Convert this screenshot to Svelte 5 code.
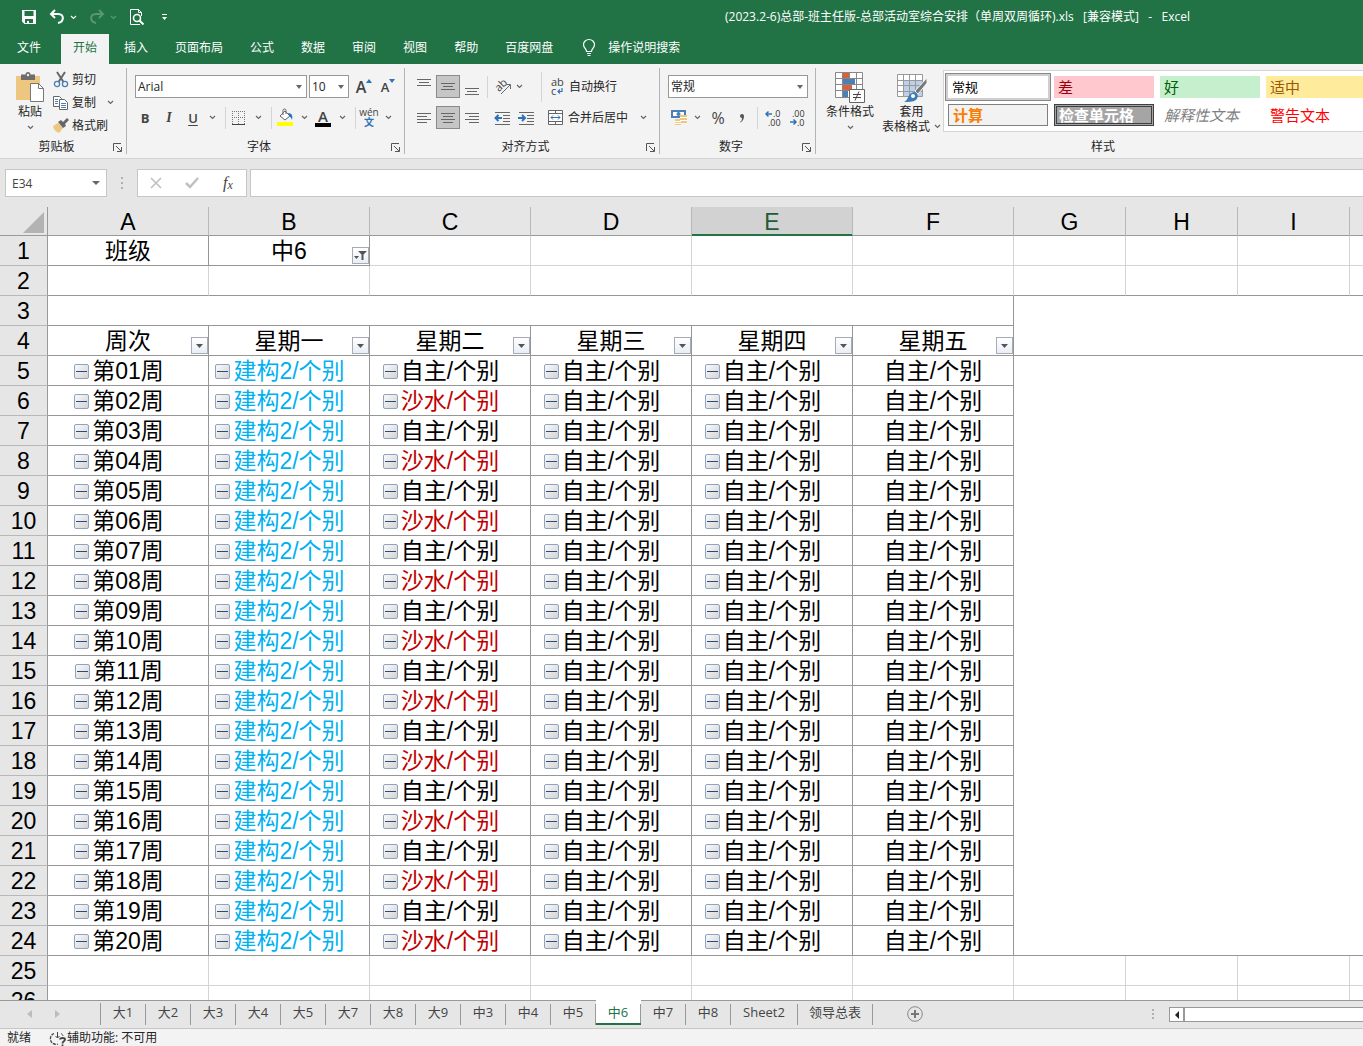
<script>
  const menuTabs = ['文件', '开始', '插入', '页面布局', '公式', '数据', '审阅', '视图', '帮助', '百度网盘'];
  const columns = ['A', 'B', 'C', 'D', 'E', 'F', 'G', 'H', 'I', 'J'];
  const headings = ['周次', '星期一', '星期二', '星期三', '星期四', '星期五'];
  const sheets = ['大1', '大2', '大3', '大4', '大5', '大7', '大8', '大9', '中3', '中4', '中5', '中6', '中7', '中8', 'Sheet2', '领导总表'];

  const cellStyles = [
    { name: '常规', type: 'normal' },
    { name: '差', type: 'bad' },
    { name: '好', type: 'good' },
    { name: '适中', type: 'neutral' },
    { name: '计算', type: 'calc' },
    { name: '检查单元格', type: 'check' },
    { name: '解释性文本', type: 'explain' },
    { name: '警告文本', type: 'warn' }
  ];

  // Every second week swaps the Tuesday activity.
  const weeks = Array.from({ length: 20 }, (_, i) => ({
    row: i + 5,
    cells: [
      { text: '第' + String(i + 1).padStart(2, '0') + '周' },
      { text: '建构2/个别', color: 'blue' },
      i % 2 ? { text: '沙水/个别', color: 'red' } : { text: '自主/个别' },
      { text: '自主/个别' },
      { text: '自主/个别' },
      { text: '自主/个别', last: true }
    ]
  }));

  let activeTab = $state('开始');
  let activeSheet = $state('中6');
  let formula = $state('');
  let nameBox = $state('E34');
</script>

{#snippet chevron()}
  <svg class="chevron" width="7" height="5" viewBox="0 0 7 5"><path d="M1 1l2.500 2.500L6 1" fill="none" stroke="currentColor" stroke-width="1.200" /></svg>
{/snippet}

{#snippet lines(rows)}
  <svg width="16" height="16" viewBox="0 0 16 16" shape-rendering="crispEdges">
    {#each rows as [x, y, w]}
      <rect {x} {y} width={w} height="1" fill="#666" />
    {/each}
  </svg>
{/snippet}

{#snippet launcher(label)}
  <button class="launcher" aria-label={label}>
    <svg width="10" height="10" viewBox="0 0 10 10"><path d="M.5 8V.5H8M3 3l5 5M8.500 4v4.500H4" fill="none" stroke="#555" /></svg>
  </button>
{/snippet}

{#snippet filterButton(active)}
  <button class="filter" aria-label="筛选">
    {#if active}
      <svg width="13" height="11" viewBox="0 0 13 11"><path d="M4 1h9L9.500 4.500V10h-2V4.500z" fill="#555" /><path d="M0 6h5L2.500 9z" fill="#555" /></svg>
    {:else}
      <svg width="7" height="4" viewBox="0 0 7 4"><path d="M0 0h7L3.500 4z" fill="#555" /></svg>
    {/if}
  </button>
{/snippet}

<div class="app">
  <header>
    <div class="titlebar">
      <div class="quick">
        <button class="qa" aria-label="保存">
          <svg width="16" height="16" viewBox="0 0 16 16"><path d="M1 1h14v14H3.500L1 12.500zM3.500 2v5h9V2zM4 10v4h8v-4z" fill="#fff" fill-rule="evenodd" /><path d="M6 12h2v3H6z" fill="#fff" /></svg>
        </button>
        <div class="pair">
          <button class="qa" aria-label="撤消">
            <svg width="16" height="16" viewBox="0 0 16 16"><path d="M6 1L2 5l4 4M2 5h7c7 0 6 8 0 9" fill="none" stroke="#fff" stroke-width="2" /></svg>
          </button>
          <button class="arrow" aria-label="撤消列表">{@render chevron()}</button>
        </div>
        <div class="pair faded">
          <button class="qa" aria-label="恢复">
            <svg width="16" height="16" viewBox="0 0 16 16"><path d="M10 1l4 4-4 4M14 5H7c-7 0-6 8 0 9" fill="none" stroke="#fff" stroke-width="2" /></svg>
          </button>
          <button class="arrow" aria-label="恢复列表">{@render chevron()}</button>
        </div>
        <button class="qa" aria-label="打印预览">
          <svg width="16" height="16" viewBox="0 0 16 16" fill="none" stroke="#fff"><path d="M11 15.500H1.500V.5h8l3 3V7" /><path d="M9.500.5v3h3" /><circle cx="8" cy="9" r="3.500" stroke-width="1.600" /><path d="M10.500 11.500l4 4" stroke-width="2" /></svg>
        </button>
        <button class="custom" aria-label="自定义快速访问工具栏">
          <svg width="7" height="8" viewBox="0 0 7 8"><path d="M1 1h5v1H1zM1 4h5L3.500 7z" fill="#fff" /></svg>
        </button>
      </div>
      <h1>(2023.2-6)总部-班主任版-总部活动室综合安排（单周双周循环).xls   [兼容模式]   -   Excel</h1>
    </div>

    <nav class="menu">
      {#each menuTabs as tab}
        <button class:active={tab === activeTab} class:file={tab === '文件'} onclick={() => (activeTab = tab)}>{tab}</button>
      {/each}
      <button class="tell">
        <svg width="14" height="18" viewBox="0 0 14 18" fill="none" stroke="#fff" stroke-width="1.200"><path d="M4.500 12.500c0-3-3-3.500-3-7a5.500 5 0 0 1 11 0c0 3.500-3 4-3 7zM5 14.500h4M5.500 16.500h3" /></svg>
        操作说明搜索
      </button>
    </nav>
  </header>

  <div class="ribbon">
    <section class="group clipboard">
      <div class="tools">
        <button class="big paste">
          <svg width="30" height="31" viewBox="0 0 30 31"><path d="M1 4h24v24H1z" fill="#edc77f" /><path d="M6 2.500h4.500a2.500 2.500 0 0 1 5 0H20V8H6z" fill="#6d6d6d" /><circle cx="13" cy="3" r="1.200" fill="#f3f3f3" /><path d="M15.500 11.500h8l5 5v13h-13z" fill="#fff" stroke="#777" /><path d="M23.500 11.500v5h5" fill="none" stroke="#777" /></svg>
          <span>粘贴</span>
          {@render chevron()}
        </button>
        <div class="stack">
          <button>
            <svg width="16" height="16" viewBox="0 0 16 16" fill="none"><path d="M4 0l6.500 10M12 0L5.500 10" stroke="#666" stroke-width="2" /><circle cx="4" cy="12" r="2.600" stroke="#4a7fb8" stroke-width="1.300" /><circle cx="12" cy="12" r="2.600" stroke="#4a7fb8" stroke-width="1.300" /></svg>
            剪切
          </button>
          <button>
            <svg width="16" height="16" viewBox="0 0 16 16" fill="#fff" stroke="#666"><path d="M.5 1.500h6l2 2v8h-8z" /><path d="M6.500 4.500h5l3 3v7h-8z" /><path d="M2 4.500h3M2 6.500h3M2 8.500h3M8 8.500h5M8 10.500h5M8 12.500h5" stroke="#4a7fb8" /></svg>
            复制
            <span class="copy-arrow">{@render chevron()}</span>
          </button>
          <button>
            <svg width="16" height="16" viewBox="0 0 16 16"><path d="M0 8l5-3 5 5-4 5c-3-1-5-3-6-7z" fill="#edc77f" /><path d="M5 4l3-2 2 2 4-4 2 2-4 4 1 2-3 2z" fill="#666" /></svg>
            格式刷
          </button>
        </div>
      </div>
      <footer><span>剪贴板</span>{@render launcher('剪贴板设置')}</footer>
    </section>

    <section class="group font">
      <div class="tools rows">
        <div class="line">
          <label class="combo family"><select aria-label="字体"><option>Arial</option></select></label>
          <label class="combo size"><select aria-label="字号"><option>10</option></select></label>
          <button class="tool letter" aria-label="增大字号">A<svg width="6" height="4" viewBox="0 0 6 4"><path d="M0 4l3-4 3 4z" fill="#2f73b7" /></svg></button>
          <button class="tool letter small" aria-label="减小字号">A<svg width="6" height="4" viewBox="0 0 6 4"><path d="M0 0h6L3 4z" fill="#2f73b7" /></svg></button>
        </div>
        <div class="line">
          <button class="tool bold">B</button>
          <button class="tool italic">I</button>
          <button class="tool underline">U</button>
          <button class="arrow" aria-label="下划线样式">{@render chevron()}</button>
          <i class="sep"></i>
          <button class="tool" aria-label="边框">
            <svg width="14" height="14" viewBox="0 0 14 14" stroke="#777" shape-rendering="crispEdges"><path d="M0 .5h14M0 6.500h14M.5 0v13M6.500 0v13M12.500 0v13" stroke-dasharray="1 1" /><path d="M0 13h13" stroke="#444" /></svg>
          </button>
          <button class="arrow" aria-label="边框样式">{@render chevron()}</button>
          <i class="sep"></i>
          <button class="tool" aria-label="填充颜色">
            <svg width="17" height="17" viewBox="0 0 17 17"><path d="M3 7l5-5 5 5-5 4z" fill="#fff" stroke="#666" /><path d="M6 6V1.500a1.500 1.500 0 0 1 3 0V5" fill="none" stroke="#666" /><path d="M11 4c4 0 5 3 4 7-1-3-2-3-3-4z" fill="#2f73b7" /><path d="M0 13h16v4H0z" fill="#ff0" /></svg>
          </button>
          <button class="arrow" aria-label="填充颜色列表">{@render chevron()}</button>
          <button class="tool font-color"><span>A</span></button>
          <button class="arrow" aria-label="字体颜色列表">{@render chevron()}</button>
          <i class="sep"></i>
          <button class="tool pinyin"><span>wén</span><b>文</b></button>
          <button class="arrow" aria-label="拼音选项">{@render chevron()}</button>
        </div>
      </div>
      <footer><span>字体</span>{@render launcher('字体设置')}</footer>
    </section>

    <section class="group align">
      <div class="tools rows">
        <div class="line">
          <button class="tool" aria-label="顶端对齐">{@render lines([[1, 0, 14], [3, 3, 10], [1, 6, 14]])}</button>
          <button class="tool on" aria-label="垂直居中">{@render lines([[1, 4, 14], [3, 7, 10], [1, 10, 14]])}</button>
          <button class="tool" aria-label="底端对齐">{@render lines([[1, 9, 14], [3, 12, 10], [1, 15, 14]])}</button>
          <i class="sep"></i>
          <button class="tool" aria-label="方向">
            <svg width="17" height="17" viewBox="0 0 17 17"><text x="0" y="11" font-size="11" font-family="Open Sans" fill="#444" transform="rotate(-45 6 8)">ab</text><path d="M6 16l9-9M11 6.500h4.500V11" fill="none" stroke="#666" /></svg>
          </button>
          <button class="arrow" aria-label="方向列表">{@render chevron()}</button>
          <i class="sep second"></i>
          <button class="wide">
            <svg width="16" height="18" viewBox="0 0 16 18"><text x="2" y="8" font-size="11" font-family="Open Sans" fill="#444">ab</text><text x="2" y="17" font-size="11" font-family="Open Sans" fill="#444">c</text><path d="M13 10v3.500H9M11 11.500l-2 2 2 2" fill="none" stroke="#2f73b7" stroke-width="1.200" /></svg>
            自动换行
          </button>
        </div>
        <div class="line">
          <button class="tool" aria-label="左对齐">{@render lines([[1, 3, 14], [1, 6, 10], [1, 9, 14], [1, 12, 10]])}</button>
          <button class="tool on" aria-label="居中">{@render lines([[1, 3, 14], [3, 6, 10], [1, 9, 14], [3, 12, 10]])}</button>
          <button class="tool" aria-label="右对齐">{@render lines([[1, 3, 14], [5, 6, 10], [1, 9, 14], [5, 12, 10]])}</button>
          <i class="sep"></i>
          <button class="tool" aria-label="减少缩进量">
            <svg width="17" height="14" viewBox="0 0 17 14"><path d="M1 1.500h15M9 4.500h7M9 7.500h7M9 10.500h7M1 13.500h15" stroke="#666" /><path d="M8 7H2M4.500 4L1.500 7l3 3" fill="none" stroke="#2f73b7" stroke-width="2" /></svg>
          </button>
          <button class="tool" aria-label="增加缩进量">
            <svg width="17" height="14" viewBox="0 0 17 14"><path d="M1 1.500h15M9 4.500h7M9 7.500h7M9 10.500h7M1 13.500h15" stroke="#666" /><path d="M0 7h6M4 4l3 3-3 3" fill="none" stroke="#2f73b7" stroke-width="2" /></svg>
          </button>
          <i class="sep second"></i>
          <button class="wide">
            <svg width="16" height="16" viewBox="0 0 16 16"><path d="M.5.5h14v14H.5zM.5 3.500h14M.5 11.500h14M7.500.5v3M7.500 11.500v3" fill="#fff" stroke="#666" /><path d="M3 7.500h9M5 5.500l-2 2 2 2M10 5.500l2 2-2 2" fill="none" stroke="#2f73b7" /></svg>
            合并后居中
          </button>
          <button class="arrow merge-arrow" aria-label="合并选项">{@render chevron()}</button>
        </div>
      </div>
      <footer><span>对齐方式</span>{@render launcher('对齐设置')}</footer>
    </section>

    <section class="group number">
      <div class="tools rows">
        <div class="line">
          <label class="combo format"><select aria-label="数字格式"><option>常规</option></select></label>
        </div>
        <div class="line">
          <button class="tool" aria-label="会计数字格式">
            <svg width="18" height="17" viewBox="0 0 18 17"><path d="M1 1h15v8H1z" fill="#4a7fb8" /><path d="M3 3h11v4H3z" fill="#fff" /><circle cx="8.500" cy="5" r="2" fill="#4a7fb8" /><path d="M10 6h7v8h-7z" fill="#edc77f" /><path d="M5 10h6v6H5z" fill="#edc77f" /><path d="M10 8.500h7M10 11.500h7M5 12.500h6M5 14.500h6" stroke="#fff" /></svg>
          </button>
          <button class="arrow" aria-label="货币列表">{@render chevron()}</button>
          <button class="tool percent">%</button>
          <button class="tool comma" aria-label="千位分隔样式"><svg width="6" height="10" viewBox="0 0 6 10"><path d="M1 3a2 2 0 1 1 4 0c0 3-1 5-3.500 6.500L1 9c1.500-1 2-2 2-4-1 0-2-1-2-2z" fill="#555" /></svg></button>
          <i class="sep"></i>
          <button class="tool" aria-label="增加小数位数">
            <svg width="17" height="16" viewBox="0 0 17 16"><path d="M7 4H1M3.500 1.500L1 4l2.500 2.500" fill="none" stroke="#2f73b7" stroke-width="1.500" /><text x="8" y="7" font-size="9" font-family="Open Sans" fill="#333">.0</text><text x="3" y="16" font-size="9" font-family="Open Sans" fill="#333">.00</text></svg>
          </button>
          <button class="tool" aria-label="减少小数位数">
            <svg width="17" height="16" viewBox="0 0 17 16"><path d="M1 12h6M4.500 9.500L7 12l-2.500 2.500" fill="none" stroke="#2f73b7" stroke-width="1.500" /><text x="3" y="7" font-size="9" font-family="Open Sans" fill="#333">.00</text><text x="8" y="16" font-size="9" font-family="Open Sans" fill="#333">.0</text></svg>
          </button>
        </div>
      </div>
      <footer><span>数字</span>{@render launcher('数字设置')}</footer>
    </section>

    <section class="group styles">
      <div class="tools">
        <button class="big cond">
          <svg width="30" height="31" viewBox="0 0 30 31"><path d="M.5.5h27v25H.5z" fill="#fff" /><path d="M8 1h6v6H8zM8 13h9v6H8z" fill="#d9603b" /><path d="M8 7h12v6H8zM8 19h5v6H8z" fill="#4a7fb8" /><path d="M.5.5h27v25H.5zM.5 6.500h27M.5 12.500h27M.5 18.500h27M7.500.5v25M14.500.5v6M21.500.5v25" fill="none" stroke="#888" /><path d="M14.500 17.500h15v13h-15z" fill="#fff" stroke="#666" /><path d="M18 22.500h8M18 25.500h8M24 19.500l-4 9" stroke="#444" /></svg>
          <span>条件格式</span>
          {@render chevron()}
        </button>
        <button class="big format-table">
          <svg width="30" height="31" viewBox="0 0 30 31"><path d="M.5 2.500h25v22H.5z" fill="#fff" /><path d="M7 8h18v16H7z" fill="#bdd0e8" /><path d="M.5 2.500h25v22H.5zM.5 8.500h25M.5 13.500h25M.5 19.500h25M6.500 2.500v22M12.500 2.500v22M18.500 2.500v22" fill="none" stroke="#999" /><path d="M30 6L18 19l3 3 9-11z" fill="#777" stroke="#f3f3f3" /><path d="M7 30c4-1 4-9 10-10 4 0 5 5 2 8-3 2-8 2-12 2z" fill="#3e7ab8" /><circle cx="16" cy="24" r="2" fill="#fff" /></svg>
          <span>套用</span>
          <span class="with-arrow">表格格式 {@render chevron()}</span>
        </button>
        <div class="gallery">
          {#each cellStyles as style}
            <button class="style {style.type}">{style.name}</button>
          {/each}
        </div>
      </div>
      <footer><span>样式</span></footer>
    </section>
  </div>

  <div class="formula-bar">
    <div class="name-box combo"><input aria-label="名称框" bind:value={nameBox} /></div>
    <svg class="dots" width="2" height="12" viewBox="0 0 2 12"><path d="M0 0h2v2H0zM0 5h2v2H0zM0 10h2v2H0z" fill="#b0b0b0" /></svg>
    <div class="formula-buttons">
      <button aria-label="取消"><svg width="12" height="12" viewBox="0 0 12 12"><path d="M1 1l10 10M11 1L1 11" stroke="#c0c0c0" stroke-width="1.600" /></svg></button>
      <button aria-label="输入"><svg width="14" height="12" viewBox="0 0 14 12"><path d="M1 6l4 4 8-9" fill="none" stroke="#c0c0c0" stroke-width="2.500" /></svg></button>
      <button class="fx">f<small>x</small></button>
    </div>
    <input class="formula" aria-label="编辑栏" bind:value={formula} />
  </div>

  <main>
    <table>
      <colgroup>
        <col class="col-head" />
        {#each columns as column, i}
          <col class={i < 6 ? 'col-wide' : 'col-narrow'} />
        {/each}
      </colgroup>
      <thead>
        <tr>
          <th class="corner"><svg width="21" height="21" viewBox="0 0 21 21"><path d="M21 0v21H0z" fill="#b3b3b3" /></svg></th>
          {#each columns as column}
            <th class:selected={column === 'E'}>{column}</th>
          {/each}
        </tr>
      </thead>
      <tbody>
        <tr>
          <th>1</th>
          <td class="dark">班级</td>
          <td class="dark">中6{@render filterButton(true)}</td>
          {#each columns.slice(2) as column}<td></td>{/each}
        </tr>
        <tr class="ruled">
          <th>2</th>
          {#each columns as column}<td></td>{/each}
        </tr>
        <tr>
          <th>3</th>
          <td class="dark" colspan="6"></td>
          <td class="dark" colspan="4" rowspan="2"></td>
        </tr>
        <tr>
          <th>4</th>
          {#each headings as heading}
            <td class="dark">{heading}{@render filterButton(false)}</td>
          {/each}
        </tr>
        {#each weeks as week, i}
          <tr>
            <th>{week.row}</th>
            {#each week.cells as cell}
              <td class="dark {cell.color ?? ''}">
                {#if !cell.last}<button class="collapse" aria-label="折叠"></button>{/if}{cell.text}
              </td>
            {/each}
            {#if i === 0}<td class="dark" colspan="4" rowspan="20"></td>{/if}
          </tr>
        {/each}
        {#each [25, 26] as row}
          <tr>
            <th>{row}</th>
            {#each columns as column}<td></td>{/each}
          </tr>
        {/each}
      </tbody>
    </table>
  </main>

  <div class="sheet-bar">
    <div class="sheet-nav">
      <button aria-label="上一个"><svg width="5" height="8" viewBox="0 0 5 8"><path d="M5 0v8L0 4z" fill="#bcbcbc" /></svg></button>
      <button aria-label="下一个"><svg width="5" height="8" viewBox="0 0 5 8"><path d="M0 0v8l5-4z" fill="#bcbcbc" /></svg></button>
    </div>
    <div class="sheets">
      {#each sheets as sheet}
        <button class:current={sheet === activeSheet} onclick={() => (activeSheet = sheet)}><span>{sheet}</span></button>
      {/each}
    </div>
    <button class="add" aria-label="新工作表">
      <svg width="16" height="16" viewBox="0 0 16 16"><circle cx="8" cy="8" r="7.300" fill="none" stroke="#888" /><path d="M8 4v8M4 8h8" stroke="#777" stroke-width="2" /></svg>
    </button>
    <svg class="dots" width="2" height="10" viewBox="0 0 2 10"><path d="M0 0h2v2H0zM0 4h2v2H0zM0 8h2v2H0z" fill="#b0b0b0" /></svg>
    <div class="scrollbar">
      <button aria-label="向左滚动"><svg width="4" height="8" viewBox="0 0 4 8"><path d="M4 0v8L0 4z" fill="#222" /></svg></button>
      <div class="thumb"></div>
    </div>
  </div>

  <div class="status">
    <span>就绪</span>
    <button>
      <svg width="17" height="15" viewBox="0 0 17 15" fill="none" stroke="#444"><path d="M4 2.500a5.500 5.500 0 0 0 4 10.500" stroke-dasharray="3 1" stroke-width="1.300" /><path d="M7.500 1v6M5.500 5l2 2 2-2M11 2.500c1 .5 2 1.500 2 2.500" /><path d="M10 8.500c0-2 5-2 5 0s-2.500 1.500-2.500 4M12.500 13.500V15" stroke-width="1.800" /></svg>
      辅助功能: 不可用
    </button>
  </div>
</div>

<style>
  :global(body) {
    margin: 0;
    overflow: hidden;
  }

  .app {
    display: flex;
    flex-direction: column;
    height: 100vh;
    overflow: hidden;
    background: #e6e6e6;
    color: #262626;
    font: 12px/16px 'Open Sans', 'Noto Sans CJK SC', sans-serif;
  }

  button,
  input,
  select {
    margin: 0;
    padding: 0;
    border: 0;
    background: none;
    color: inherit;
    font: inherit;
    box-sizing: border-box;
  }

  button {
    display: flex;
    align-items: center;
    justify-content: center;
    white-space: nowrap;
  }

  svg {
    display: block;
    flex: none;
    overflow: visible;
  }

  header {
    background: #217346;
    color: #fff;
  }

  .titlebar {
    display: flex;
    align-items: center;
    height: 34px;
  }

  .quick {
    display: flex;
    gap: 10px;
    padding-left: 20px;
  }

  .pair {
    display: flex;
    gap: 2px;
  }

  .faded {
    opacity: 0.25;
  }

  .qa {
    width: 18px;
    height: 18px;
  }

  .custom {
    width: 16px;
  }

  .arrow {
    width: 10px;
    flex: none;
  }

  h1 {
    margin: 0 0 0 553px;
    font-size: 12px;
    font-weight: normal;
    white-space: pre;
  }

  .menu {
    display: flex;
    gap: 3px;
    height: 30px;
    padding-left: 5px;
  }

  .menu button {
    padding: 0 12px 3px;
  }

  .menu .file {
    margin-right: 5px;
  }

  .menu .active {
    background: #f3f3f3;
    color: #217346;
  }

  .menu .tell {
    gap: 12px;
    padding-left: 14px;
  }

  .ribbon {
    display: flex;
    flex: none;
    height: 94px;
    overflow: hidden;
    background: #f3f3f3;
    border-bottom: 1px solid #d2d2d2;
  }

  .group {
    display: flex;
    flex: none;
    flex-direction: column;
    margin: 4px 0;
    border-right: 1px solid #b4b4b4;
    box-sizing: border-box;
  }

  .clipboard {
    width: 127px;
  }

  .font {
    width: 278px;
  }

  .align {
    width: 255px;
  }

  .number {
    width: 156px;
  }

  .styles {
    width: 578px;
  }

  .tools {
    display: flex;
    flex: 1;
  }

  .group footer {
    display: flex;
    align-items: center;
    height: 14px;
    padding-right: 3px;
  }

  .group footer span {
    flex: 1;
    text-align: center;
  }

  .launcher {
    align-self: flex-end;
    width: 10px;
    height: 12px;
  }

  .big {
    flex-direction: column;
    justify-content: flex-start;
    padding-top: 4px;
  }

  .big span {
    line-height: 15px;
  }

  .chevron {
    color: #666;
  }

  .titlebar .chevron {
    color: #fff;
  }

  .big > .chevron {
    margin-top: 6px;
  }

  .big > svg:first-child {
    margin-bottom: 1px;
  }

  .paste {
    width: 32px;
    margin-left: 14px;
  }

  .stack {
    margin-left: 7px;
  }

  .stack button {
    gap: 3px;
    height: 23px;
  }

  .copy-arrow {
    margin-left: 8px;
  }

  .rows {
    flex-direction: column;
    gap: 8px;
    padding-top: 7px;
    padding-left: 7px;
  }

  .rows .line {
    display: flex;
    flex: none;
    align-items: center;
    height: 23px;
  }

  .font .rows {
    padding-left: 6px;
  }

  .tool {
    flex: none;
    width: 24px;
    height: 23px;
    color: #444;
  }

  .on {
    background: #c6c6c6;
    border: 1px solid #8a8a8a;
  }

  .sep {
    width: 1px;
    height: 22px;
    margin: 0 3px;
    background: #d4d4d4;
  }

  .font .sep {
    margin-left: 6px;
    margin-right: 1px;
  }

  .font .arrow {
    width: 14px;
  }

  .combo {
    position: relative;
    display: block;
    height: 23px;
    background: #fff;
    border: 1px solid #999;
    box-sizing: border-box;
  }

  .combo select,
  .combo input {
    width: 100%;
    height: 100%;
    padding-left: 2px;
    appearance: none;
    outline: 0;
  }

  .combo::after {
    content: '';
    position: absolute;
    top: 9px;
    right: 4px;
    border: 3px solid transparent;
    border-top: 4px solid #666;
    border-bottom: 0;
    pointer-events: none;
  }

  .family {
    width: 172px;
    margin-left: 2px;
    margin-right: 2px;
  }

  .size {
    width: 40px;
    margin-right: 3px;
  }

  .format {
    width: 140px;
    margin-left: 1px;
  }

  .letter {
    align-items: flex-start;
    font-size: 16px;
    font-weight: 600;
    line-height: 24px;
  }

  .letter svg {
    margin-top: 4px;
  }

  .small {
    font-size: 13px;
  }

  .bold {
    font-weight: bold;
    font-size: 13px;
  }

  .italic {
    font: italic bold 14px 'Liberation Serif', serif;
  }

  .underline {
    font-weight: 600;
    font-size: 13px;
    text-decoration: underline;
    text-underline-offset: 2px;
  }

  .font-color span {
    width: 16px;
    border-bottom: 4px solid #000;
    font-size: 15px;
    font-weight: 600;
    line-height: 14px;
  }

  .pinyin {
    flex-direction: column;
    font-size: 10px;
    line-height: 9px;
  }

  .pinyin b {
    color: #2f73b7;
    line-height: 10px;
  }

  .align .arrow {
    margin-right: 14px;
    margin-left: -1px;
  }

  .number .arrow {
    margin-left: 1px;
    margin-right: 4px;
  }

  .align .second {
    height: 30px;
    margin: 0 7px 0 3px;
  }

  .wide {
    gap: 4px;
  }

  .align .merge-arrow {
    margin-left: 10px;
  }

  .percent {
    font-size: 16px;
  }

  .cond {
    width: 60px;
    margin-left: 4px;
  }

  .format-table {
    width: 63px;
  }

  .with-arrow {
    display: flex;
    align-items: center;
    gap: 4px;
  }

  .gallery {
    display: grid;
    grid-template-columns: repeat(4, 100px);
    grid-auto-rows: 22px;
    gap: 6px;
    width: 450px;
    height: 62px;
    margin-top: 2px;
    padding: 5px 4px;
    background: #fff;
    border: 1px solid #d4d4d4;
    box-sizing: border-box;
  }

  .style {
    justify-content: flex-start;
    padding-left: 4px;
    font-size: 15px;
    line-height: 20px;
  }

  .normal {
    font-size: 13px;
    color: #000;
    outline: 2px solid #d0cece;
    box-shadow: 0 0 0 3px #888;
  }

  .bad {
    background: #ffc7ce;
    color: #9c0006;
  }

  .good {
    background: #c6efce;
    color: #006100;
  }

  .neutral {
    background: #ffeb9c;
    color: #9c5700;
  }

  .calc {
    background: #f2f2f2;
    border: 1px solid #7f7f7f;
    color: #fa7d00;
    font-weight: bold;
  }

  .check {
    background: #a5a5a5;
    border: 3px double #3f3f3f;
    color: #fff;
    font-weight: bold;
    padding-left: 2px;
  }

  .explain {
    color: #7f7f7f;
    font-style: italic;
  }

  .warn {
    color: #f00;
  }

  .formula-bar {
    display: flex;
    flex: none;
    align-items: center;
    height: 28px;
    padding: 10px 0 10px 5px;
  }

  .name-box {
    width: 102px;
    height: 28px;
    border-color: #c6c6c6;
    color: #444;
  }

  .name-box input {
    padding-left: 6px;
  }

  .name-box::after {
    top: 11px;
    right: 6px;
    border-width: 4px 4px 0;
  }

  .formula-bar .dots {
    margin: 0 14px;
  }

  .formula-buttons {
    display: flex;
    width: 110px;
    height: 28px;
    margin-right: 3px;
    background: #fff;
    border: 1px solid #c6c6c6;
    box-sizing: border-box;
  }

  .formula-buttons button {
    flex: 1;
  }

  .formula-buttons .fx {
    font: italic 16px 'Liberation Serif', serif;
    color: #444;
  }

  .fx small {
    padding-top: 4px;
    font-size: 12px;
  }

  .formula {
    flex: 1;
    height: 28px;
    padding: 0 6px;
    background: #fff;
    border: 1px solid #c6c6c6;
    border-right: 0;
  }

  main {
    flex: 1;
    min-height: 0;
    overflow: hidden;
  }

  table {
    width: 1462px;
    table-layout: fixed;
    border-collapse: separate;
    border-spacing: 0;
    background: #fff;
    color: #000;
    font: 23px/28px 'Liberation Sans', 'Noto Sans CJK SC', sans-serif;
  }

  .col-head {
    width: 48px;
  }

  .col-wide {
    width: 161px;
  }

  .col-narrow {
    width: 112px;
  }

  th,
  td {
    position: relative;
    height: 30px;
    padding: 0;
    box-sizing: border-box;
    border-right: 1px solid #d4d4d4;
    border-bottom: 1px solid #d4d4d4;
    text-align: center;
    white-space: nowrap;
  }

  th {
    background: #e6e6e6;
    border-color: #b8b8b8;
    border-right-color: #999;
    font-weight: normal;
  }

  thead th {
    height: 29px;
    padding-top: 2px;
    border-right-color: #b8b8b8;
    border-bottom-color: #999;
    line-height: 26px;
  }

  .corner {
    border-right-color: #999;
  }

  .corner svg {
    margin-left: 23px;
  }

  .selected {
    background: #d2d2d2;
    border-bottom-color: #217346;
    box-shadow: inset 0 -1px #217346;
    color: #1d5c3a;
  }

  .dark {
    border-color: #969696;
  }

  .ruled td {
    border-bottom-color: #969696;
  }

  .blue {
    color: #00b0f0;
  }

  .red {
    color: #c00000;
  }

  .filter {
    position: absolute;
    right: 0;
    bottom: 1px;
    width: 17px;
    height: 17px;
    background: linear-gradient(#fff, #e9eef6);
    border: 1px solid #a5acb8;
  }

  .collapse {
    display: inline-flex;
    width: 15px;
    height: 15px;
    margin-left: -18px;
    margin-right: 3px;
    vertical-align: 7px;
    background: linear-gradient(135deg, #fafafa, #d3d3d3);
    border: 1px solid #8ea3bf;
    border-radius: 2px;
  }

  .collapse::before {
    content: '';
    width: 11px;
    height: 1px;
    background: #2c4a7c;
  }

  .sheet-bar {
    display: flex;
    flex: none;
    align-items: flex-start;
    height: 28px;
    border-bottom: 1px solid #c6c6c6;
    box-shadow: inset 0 1px #999;
    color: #444;
    font-size: 13px;
  }

  .sheet-nav {
    display: flex;
    width: 100px;
    height: 27px;
    padding-left: 15px;
    box-sizing: border-box;
  }

  .sheet-nav button {
    width: 28px;
  }

  .sheets {
    display: flex;
    border-left: 1px solid #999;
    border-image: linear-gradient(transparent 4px, #999 4px) 1;
  }

  .sheets button {
    height: 25px;
    padding-top: 4px;
  }

  .sheets span {
    min-width: 44px;
    height: 21px;
    padding: 0 11px;
    border-right: 1px solid #999;
    box-sizing: content-box;
    line-height: 16px;
  }

  .sheets button:not(:nth-last-child(-n + 2)) span {
    padding: 0;
  }

  .sheets .current {
    background: #fff;
    border-bottom: 2px solid #217346;
    color: #217346;
  }

  .sheets .current span {
    height: 19px;
  }

  .add {
    height: 27px;
    margin-left: 34px;
  }

  .sheet-bar .dots {
    margin: 9px 15px 0 auto;
  }

  .scrollbar {
    display: flex;
    width: 194px;
    height: 15px;
    margin-top: 7px;
    background: #fff;
    border: 1px solid #999;
    border-right: 0;
    box-sizing: border-box;
  }

  .scrollbar button {
    width: 13px;
  }

  .thumb {
    flex: 1;
    border-left: 2px solid #999;
  }

  .status {
    display: flex;
    flex: none;
    align-items: center;
    gap: 19px;
    height: 16px;
    padding: 1px 0 0 7px;
    background: #f3f3f3;
  }
</style>
